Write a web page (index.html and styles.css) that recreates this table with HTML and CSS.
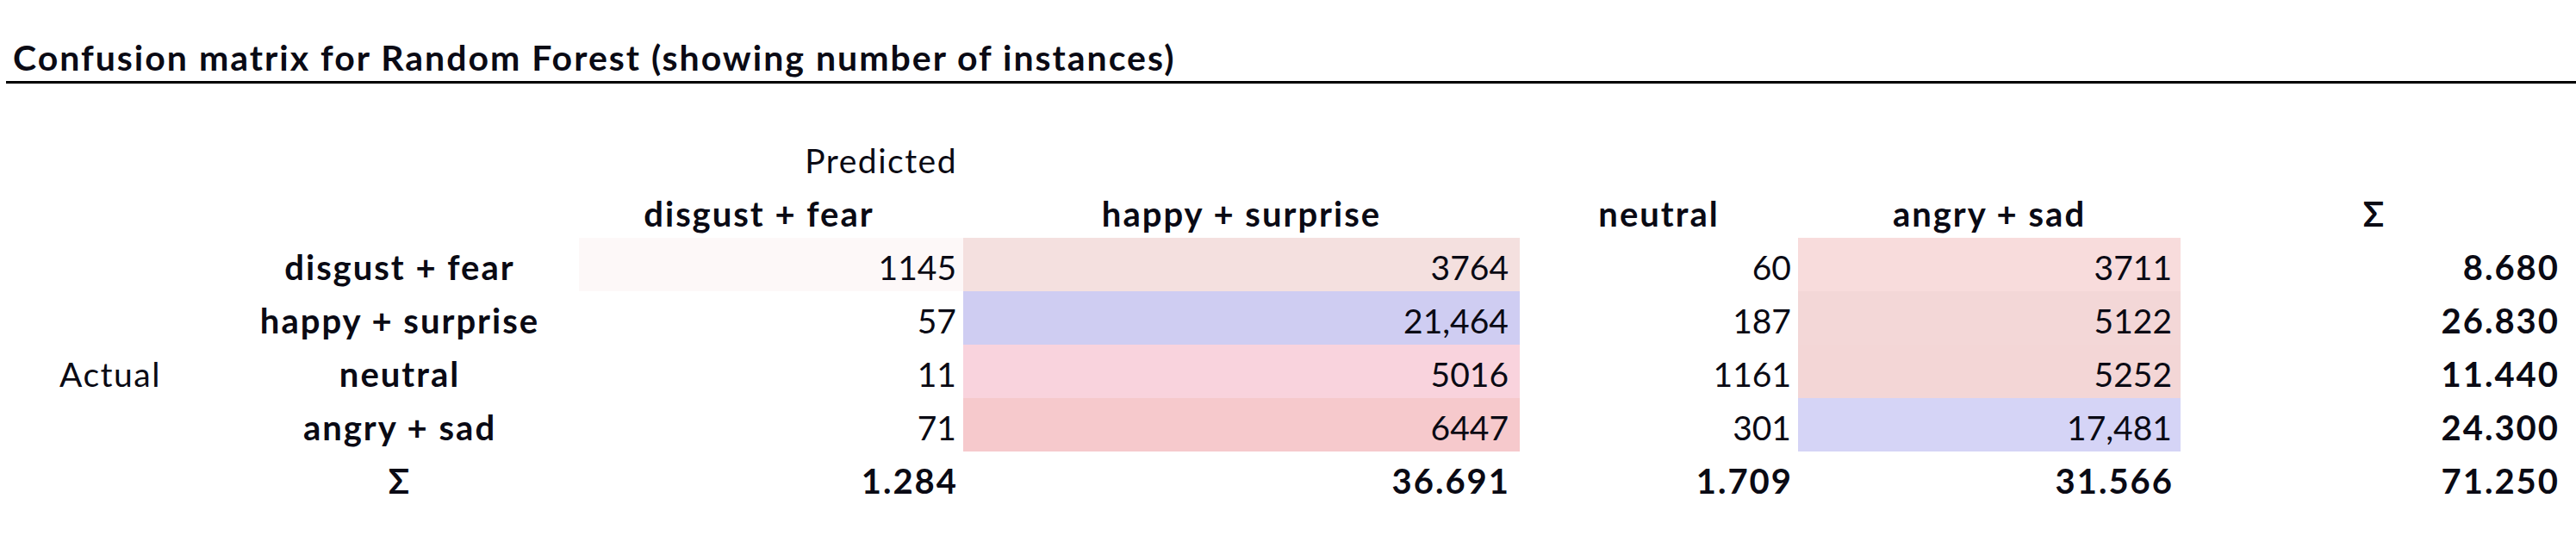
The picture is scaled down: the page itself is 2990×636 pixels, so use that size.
FILE: index.html
```html
<!DOCTYPE html>
<html>
<head>
<meta charset="utf-8">
<link rel="stylesheet" href="styles.css">
</head>
<body>
<div class="title">Confusion matrix for Random Forest (showing number of instances)</div>
<div class="matrix">
  <div class="cell"></div><div class="cell"></div>
  <div class="cell num c1 word">Predicted</div>
  <div class="cell"></div><div class="cell"></div><div class="cell"></div><div class="cell"></div>

  <div class="cell"></div><div class="cell"></div>
  <div class="cell head h1">disgust + fear</div>
  <div class="cell head">happy + surprise</div>
  <div class="cell head">neutral</div>
  <div class="cell head">angry + sad</div>
  <div class="cell head sigma">Σ</div>

  <div class="cell"></div>
  <div class="cell head">disgust + fear</div>
  <div class="cell num c1 faint">1145</div>
  <div class="cell num c2 d1">3764</div>
  <div class="cell num c3">60</div>
  <div class="cell num c4 f1">3711</div>
  <div class="cell num c5 bold">8.680</div>

  <div class="cell"></div>
  <div class="cell head">happy + surprise</div>
  <div class="cell num c1">57</div>
  <div class="cell num c2 d2">21,464</div>
  <div class="cell num c3">187</div>
  <div class="cell num c4 f2">5122</div>
  <div class="cell num c5 bold">26.830</div>

  <div class="cell word actual">Actual</div>
  <div class="cell head">neutral</div>
  <div class="cell num c1">11</div>
  <div class="cell num c2 d3">5016</div>
  <div class="cell num c3">1161</div>
  <div class="cell num c4 f3">5252</div>
  <div class="cell num c5 bold">11.440</div>

  <div class="cell"></div>
  <div class="cell head">angry + sad</div>
  <div class="cell num c1">71</div>
  <div class="cell num c2 d4">6447</div>
  <div class="cell num c3">301</div>
  <div class="cell num c4 f4">17,481</div>
  <div class="cell num c5 bold">24.300</div>

  <div class="cell"></div>
  <div class="cell head sigma">Σ</div>
  <div class="cell num c1 bold">1.284</div>
  <div class="cell num c2 bold">36.691</div>
  <div class="cell num c3 bold">1.709</div>
  <div class="cell num c4 bold">31.566</div>
  <div class="cell num c5 bold">71.250</div>
</div>
</body>
</html>
```
FILE: styles.css
```css
html, body {
  margin: 0;
  padding: 0;
  background: #ffffff;
}
body {
  width: 2990px;
  height: 636px;
  overflow: hidden;
  font-family: Lato, "Open Sans", sans-serif;
  color: #0a0a14;
}
.title {
  margin-left: 7px;
  padding: 43px 0 4px 8px;
  font-size: 41px;
  line-height: 47px;
  font-weight: 700;
  letter-spacing: 2px;
  border-bottom: 3px solid #000;
}
.matrix {
  margin-top: 55px;
  display: grid;
  grid-template-columns: 256px 416px 446px 646px 323px 444px 450px;
  grid-auto-rows: 62px;
}
.cell {
  box-sizing: border-box;
  padding-top: 11px;
  font-size: 39px;
  line-height: 47px;
  white-space: nowrap;
}
.head {
  font-weight: 700;
  font-size: 40px;
  letter-spacing: 2px;
  text-align: center;
}
.h1 {
  padding-right: 28px;
}
.word {
  letter-spacing: 1.5px;
}
.num {
  text-align: right;
}
.c1 { padding-right: 8px; }
.c2 { padding-right: 13px; }
.c3 { padding-right: 8px; }
.c4 { padding-right: 10px; }
.c5 { padding-right: 12px; }
.num.word { padding-right: 7px; }
.bold {
  font-weight: 700;
  font-size: 40px;
  letter-spacing: 2px;
}
.c1.bold { padding-right: 6px; }
.c2.bold { padding-right: 11px; }
.c3.bold { padding-right: 6px; }
.c4.bold { padding-right: 8px; }
.c5.bold { padding-right: 10px; }
.actual {
  text-align: center;
}
.faint { background: #fdf8f8; }
.d1 { background: #f4e0df; }
.d2 { background: #cfcdf2; }
.d3 { background: #f9d3dd; }
.d4 { background: #f6c9cc; }
.f1 { background: #f8dcdc; }
.f2 { background: #f3d7d7; }
.f3 { background: #f3d6d6; }
.f4 { background: #d5d4f6; }
```
